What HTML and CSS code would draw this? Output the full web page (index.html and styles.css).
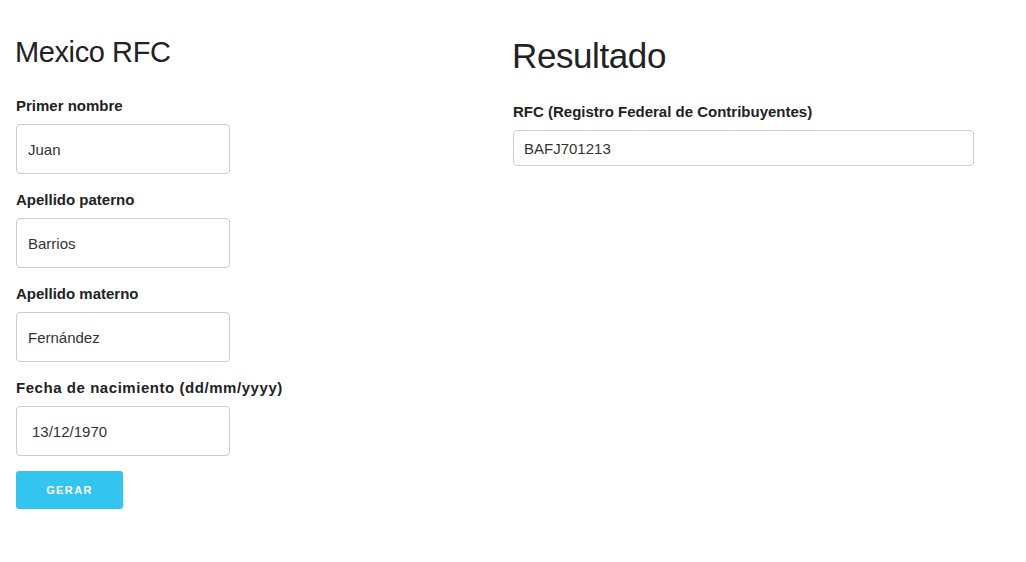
FILE: index.html
```html
<!DOCTYPE html>
<html lang="es">
<head>
<meta charset="utf-8">
<title>Mexico RFC</title>
<link rel="stylesheet" href="styles.css">
</head>
<body>
<div class="page">
  <section class="col col-left">
    <h2 class="title-sm">Mexico RFC</h2>
    <div class="group">
      <label class="label">Primer nombre</label>
      <input class="field" type="text" value="Juan">
    </div>
    <div class="group">
      <label class="label">Apellido paterno</label>
      <input class="field" type="text" value="Barrios">
    </div>
    <div class="group">
      <label class="label">Apellido materno</label>
      <input class="field" type="text" value="Fernández">
    </div>
    <div class="group">
      <label class="label label-wide">Fecha de nacimiento (dd/mm/yyyy)</label>
      <input class="field field-date" type="text" value="13/12/1970">
    </div>
    <button class="btn" type="button">GERAR</button>
  </section>
  <section class="col col-right">
    <h1 class="title-lg">Resultado</h1>
    <label class="label">RFC (Registro Federal de Contribuyentes)</label>
    <input class="field field-result" type="text" value="BAFJ701213" readonly>
  </section>
</div>
</body>
</html>
```
FILE: styles.css
```css
* { box-sizing: border-box; }
html, body {
  margin: 0;
  padding: 0;
  background: #fff;
}
body {
  font-family: "Liberation Sans", Arial, sans-serif;
  font-size: 14px;
  line-height: 20px;
  color: #333;
}
.page {
  display: grid;
  grid-template-columns: 513px 1fr;
  padding-top: 36px;
}
.col-left {
  padding-left: 16px;
}
.title-sm {
  margin: 0 0 27px -1px;
  font-size: 29px;
  line-height: 33px;
  letter-spacing: -0.4px;
  font-weight: 400;
  color: #222;
}
.title-lg {
  margin: 0 0 26px -1px;
  font-size: 35px;
  line-height: 40px;
  letter-spacing: -0.4px;
  font-weight: 400;
  color: #222;
}
.group {
  margin-bottom: 16px;
}
.label {
  display: block;
  font-size: 15px;
  font-weight: 700;
  line-height: 20px;
  margin-bottom: 8px;
  color: #222;
}
.label-wide {
  letter-spacing: 0.55px;
}
.field {
  display: block;
  width: 214px;
  height: 50px;
  padding: 0 11px;
  border: 1px solid #ccc;
  border-radius: 4px;
  font-family: "Liberation Sans", Arial, sans-serif;
  font-size: 15px;
  color: #333;
  background: #fff;
  outline: none;
}
.field-date {
  padding-left: 15px;
}
.field-result {
  width: 461px;
  height: 36px;
  padding: 0 10px;
}
.btn {
  display: block;
  margin-top: -1px;
  width: 107px;
  height: 38px;
  border: none;
  border-radius: 3px;
  background: #33c4f0;
  color: #fff;
  font-family: "Liberation Sans", Arial, sans-serif;
  font-size: 11px;
  font-weight: 700;
  letter-spacing: 1.4px;
  padding: 0;
  cursor: pointer;
}
```
